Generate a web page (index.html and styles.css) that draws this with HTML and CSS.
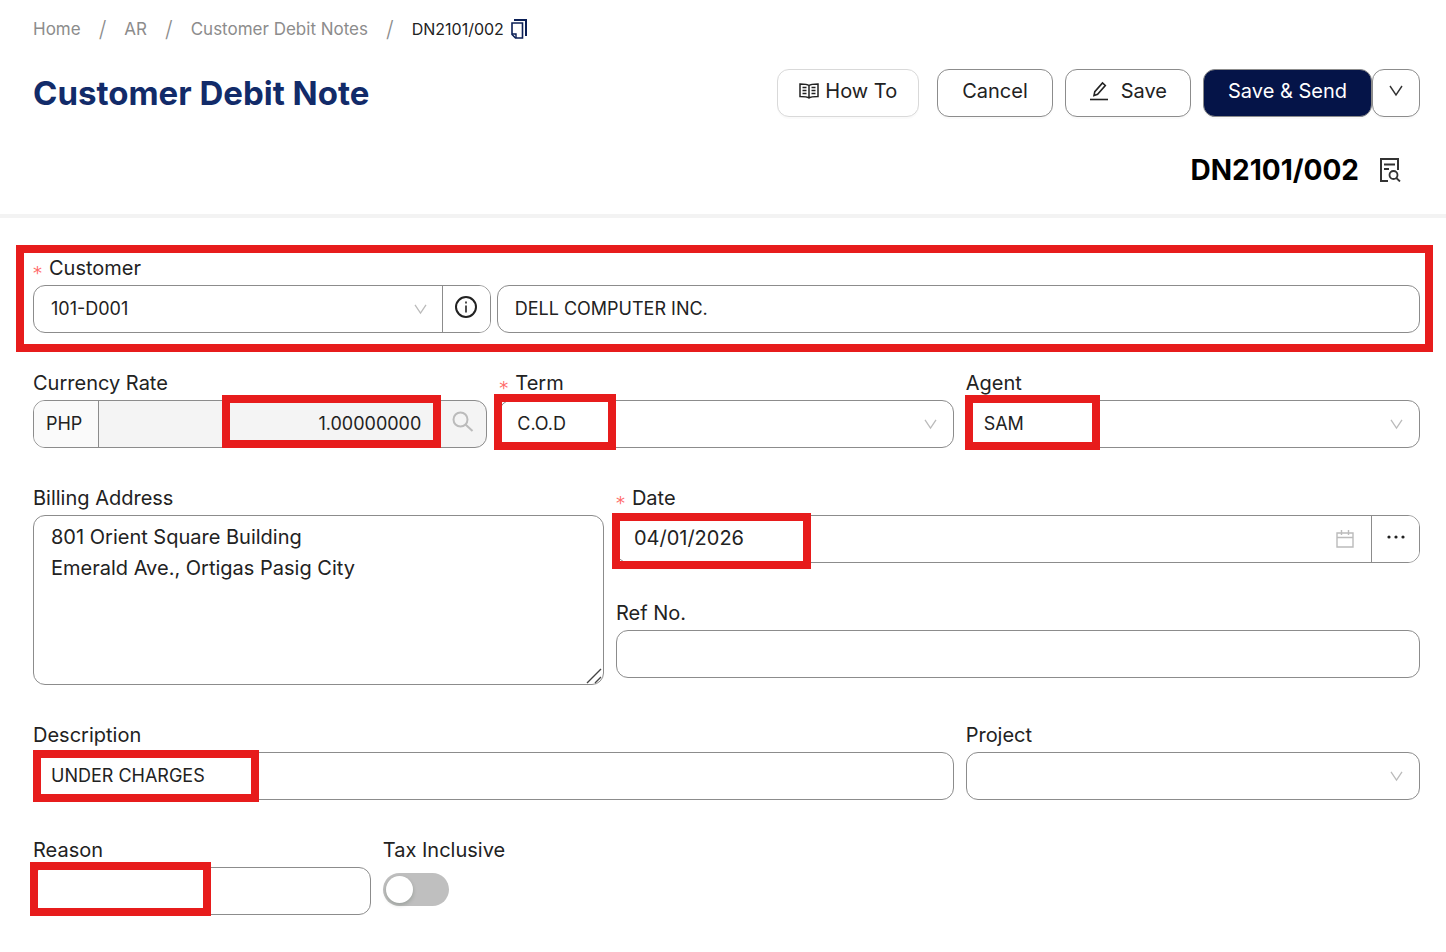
FILE: index.html
```html
<!DOCTYPE html>
<html lang="en">
  <head>
    <meta charset="utf-8">
    <title>Customer Debit Note</title>
    <link rel="stylesheet" href="styles.css">
  </head>
  <body>
    <header class="page-header">
      <nav class="breadcrumb" aria-label="Breadcrumb">
        <a href="#">Home</a>
        <span class="slash">/</span>
        <a href="#">AR</a>
        <span class="slash">/</span>
        <a href="#">Customer Debit Notes</a>
        <span class="slash">/</span>
        <span class="current">DN2101/002
          <button type="button" class="icon-btn copy" aria-label="Copy">
            <svg width="16" height="20" viewBox="0 0 16 20" fill="none" stroke="#0b1f56" stroke-width="2">
              <path d="M3 1h12v16" />
              <path d="M1 4h10.500v15H4.500L1 15.500z" stroke-width="1.600" />
              <path d="M1 15h4v4" stroke-width="1.400" />
            </svg>
          </button>
        </span>
      </nav>

      <div class="title-row">
        <h1>Customer Debit Note</h1>
        <div class="actions">
          <button type="button" class="btn btn-light">
            <svg width="20" height="18" viewBox="0 0 20 18" fill="none" stroke="#222" stroke-width="1.5">
              <path d="M10 3.500C8.500 2.300 6.500 2 1 2v12.500c5.500 0 7.500.3 9 1.500 1.500-1.200 3.500-1.500 9-1.500V2c-5.500 0-7.500.3-9 1.500zM10 3.500V16" />
              <path d="M3.500 5.500h4M3.500 8.500h4M3.500 11.500h4M12.500 5.500h4M12.500 8.500h4M12.500 11.500h4" stroke-width="1.300" />
            </svg>
            How To
          </button>
          <button type="button" class="btn">Cancel</button>
          <button type="button" class="btn btn-save">
            <svg width="20" height="20" viewBox="0 0 20 20" fill="none" stroke="#222" stroke-width="1.600">
              <path d="M1 18.500h18" />
              <path d="M5 14.500l.8-3.800L13.500 2l2.800 2.500-7.700 8.700z" />
            </svg>
            Save
          </button>
          <div class="btn-group">
            <button type="button" class="btn btn-primary">Save &amp; Send</button>
            <button type="button" class="btn btn-more" aria-label="More actions">
              <svg width="14" height="12" viewBox="0 0 14 12" fill="none" stroke="#333" stroke-width="1.400"><path d="M1 1l6 9 6-9" /></svg>
            </button>
          </div>
        </div>
      </div>

      <div class="doc-row">
        <strong class="doc-no">DN2101/002</strong>
        <button type="button" class="icon-btn" aria-label="Preview">
          <svg width="22" height="24" viewBox="0 0 22 24" fill="none" stroke="#333" stroke-width="2">
            <path d="M9 23H2V1h17v11" />
            <path d="M5 6.500h11M5 11h5" stroke-width="1.800" />
            <circle cx="14.500" cy="17" r="4" stroke-width="1.800" />
            <path d="M17.300 20l3.700 3.500" stroke-width="1.800" />
          </svg>
        </button>
      </div>
    </header>

    <form class="form">
      <div class="row-customer">
        <div class="field">
          <label for="customer" class="required">Customer</label>
          <div class="group">
            <div class="select">
              <select id="customer"><option>101-D001</option></select>
              <svg class="arrow" viewBox="0 0 14 12"><path d="M1 1l6 9 6-9" /></svg>
            </div>
            <button type="button" class="addon" aria-label="Customer info">
              <svg width="24" height="24" viewBox="0 0 24 24" fill="none" stroke="#222" stroke-width="2">
                <circle cx="12" cy="12" r="10" />
                <path d="M12 10.500V17.500M12 6.500v2" stroke-width="1.600" />
              </svg>
            </button>
          </div>
        </div>
        <div class="field field-name">
          <input type="text" class="control" aria-label="Customer name" value="DELL COMPUTER INC.">
        </div>
        <span class="mark mark-customer"></span>
      </div>

      <div class="field span-4">
        <label for="rate">Currency Rate</label>
        <div class="group rate">
          <span class="prefix">PHP</span>
          <input type="text" id="rate" value="1.00000000" readonly>
          <button type="button" class="search" aria-label="Search rate">
            <svg width="22" height="22" viewBox="0 0 22 22" fill="none" stroke="#bbb" stroke-width="2">
              <circle cx="8.500" cy="8.500" r="7" />
              <path d="M13.500 13.500l7 6.500" />
            </svg>
          </button>
        </div>
        <span class="mark mark-rate"></span>
      </div>

      <div class="field span-4">
        <label for="term" class="required">Term</label>
        <div class="select">
          <select id="term" class="control"><option>C.O.D</option></select>
          <svg class="arrow" viewBox="0 0 14 12"><path d="M1 1l6 9 6-9" /></svg>
        </div>
        <span class="mark mark-term"></span>
      </div>

      <div class="field span-4">
        <label for="agent">Agent</label>
        <div class="select">
          <select id="agent" class="control"><option>SAM</option></select>
          <svg class="arrow" viewBox="0 0 14 12"><path d="M1 1l6 9 6-9" /></svg>
        </div>
        <span class="mark mark-agent"></span>
      </div>

      <div class="field span-5">
        <label for="address">Billing Address</label>
        <div class="textarea">
          <textarea id="address" class="control">801 Orient Square Building
Emerald Ave., Ortigas Pasig City</textarea>
          <svg class="grip" viewBox="0 0 16 16"><path d="M1 15L15 1M9 15l6-6" /></svg>
        </div>
      </div>

      <div class="stack span-7">
        <div class="field">
          <label for="date" class="required">Date</label>
          <div class="group">
            <input type="text" id="date" class="date" value="04/01/2026">
            <svg class="calendar" width="18" height="18" viewBox="0 0 18 18" fill="none" stroke="#bbb" stroke-width="1.400">
              <path d="M1 3h16v14H1zM1 7.500h16M5.500 0v5M12.500 0v5" />
            </svg>
            <button type="button" class="addon" aria-label="More dates">
              <svg width="18" height="4" viewBox="0 0 18 4" fill="#222">
                <circle cx="2" cy="2" r="1.600" /><circle cx="9" cy="2" r="1.600" /><circle cx="16" cy="2" r="1.600" />
              </svg>
            </button>
          </div>
          <span class="mark mark-date"></span>
        </div>
        <div class="field">
          <label for="ref">Ref No.</label>
          <input type="text" id="ref" class="control">
        </div>
      </div>

      <div class="field span-8">
        <label for="description">Description</label>
        <input type="text" id="description" class="control" value="UNDER CHARGES">
        <span class="mark mark-description"></span>
      </div>

      <div class="field span-4">
        <label for="project">Project</label>
        <div class="select">
          <select id="project" class="control"><option></option></select>
          <svg class="arrow" viewBox="0 0 14 12"><path d="M1 1l6 9 6-9" /></svg>
        </div>
      </div>

      <div class="field span-3">
        <label for="reason">Reason</label>
        <input type="text" id="reason" class="control">
        <span class="mark mark-reason"></span>
      </div>

      <div class="field span-4">
        <label for="tax">Tax Inclusive</label>
        <input type="checkbox" id="tax" class="switch" role="switch">
      </div>
    </form>
  </body>
</html>
```
FILE: styles.css
```css
* {
  box-sizing: border-box;
}
body {
  margin: 0;
  background: #fff;
  color: #222;
  font-family: Inter, "Open Sans", sans-serif;
  font-size: 18px;
}
button,
input,
select,
textarea {
  margin: 0;
  color: inherit;
  font: inherit;
}
button {
  cursor: pointer;
}
svg {
  flex: none;
}

/* header */
.page-header {
  padding: 14px 26px 0 33px;
  border-bottom: 4px solid #f3f3f3;
}
.breadcrumb {
  display: flex;
  align-items: center;
  gap: 18px;
  height: 30px;
  font-size: 17px;
}
.breadcrumb a {
  color: #8c8c8c;
  text-decoration: none;
}
.slash {
  color: #8c8c8c;
  font-size: 22px;
  font-weight: 300;
}
.current {
  display: flex;
  align-items: center;
  gap: 7px;
  font-size: 16px;
}
.icon-btn {
  display: flex;
  padding: 0;
  border: 0;
  background: none;
}
.title-row {
  display: flex;
  justify-content: space-between;
  align-items: center;
  margin-top: 25px;
}
h1 {
  margin: 0;
  color: #122b69;
  font-size: 33px;
  font-weight: 700;
}
.actions {
  display: flex;
  gap: 12px;
}
.btn {
  display: flex;
  align-items: center;
  justify-content: center;
  gap: 6px;
  height: 48px;
  padding: 0 24px 4px;
  border: 1px solid #8c8c8c;
  border-radius: 12px;
  background: #fff;
  font-size: 20px;
  box-shadow: 0 2px 0 rgba(0, 0, 0, 0.02);
}
.btn-light {
  margin-right: 6px;
  padding: 0 21px 4px;
  border-color: #d9d9d9;
}
.btn-save {
  gap: 12px;
  padding: 0 23px 4px;
}
.btn-group {
  display: flex;
}
.btn-primary {
  background: #051448;
  color: #fff;
}
.btn-more {
  width: 48px;
  padding: 0 0 4px;
}
.doc-row {
  display: flex;
  justify-content: flex-end;
  align-items: center;
  gap: 20px;
  height: 97px;
  padding: 8px 19px 0 0;
}
.doc-no {
  color: #000;
  font-size: 28px;
}

/* form */
.form {
  display: grid;
  grid-template-columns: repeat(12, 1fr);
  gap: 35px 12px;
  padding: 35px 26px 37px 33px;
}
.row-customer {
  position: relative;
  display: grid;
  grid-column: 1 / -1;
  grid-template-columns: 33% 1fr;
  gap: 6px;
}
.span-3 { grid-column: span 3; }
.span-4 { grid-column: span 4; }
.span-5 { grid-column: span 5; }
.span-7 { grid-column: span 7; }
.span-8 { grid-column: span 8; }
.field {
  position: relative;
  display: flex;
  flex-direction: column;
}
.field-name {
  justify-content: flex-end;
}
.stack {
  display: flex;
  flex-direction: column;
  gap: 35px;
}
label {
  height: 32px;
  font-size: 20px;
  line-height: 31px;
}
.required::before {
  content: "*";
  display: inline-block;
  width: 16px;
  color: #ff6b6b;
  font-family: "DejaVu Sans", sans-serif;
  font-size: 18px;
  line-height: 1;
  vertical-align: -4px;
}
.control,
.group {
  width: 100%;
  height: 48px;
  border: 1px solid #8c8c8c;
  border-radius: 12px;
  background: #fff;
}
.control,
.group input,
.group select {
  padding: 0 17px 2px;
  outline: none;
}
.group {
  display: flex;
  align-items: stretch;
  overflow: hidden;
}
.group .select,
.group input {
  flex: 1;
  min-width: 0;
}
.group input,
.group select {
  width: 100%;
  height: 100%;
  border: 0;
  background: none;
}
.group .date {
  font-size: 20px;
}
select {
  appearance: none;
}
.select,
.textarea {
  position: relative;
}
.arrow {
  position: absolute;
  top: 50%;
  right: 17px;
  width: 13px;
  height: 11px;
  margin-top: -5px;
  fill: none;
  stroke: #bbb;
  stroke-width: 1.4;
  pointer-events: none;
}
.group .arrow {
  right: 15px;
}
.addon {
  display: flex;
  align-items: center;
  justify-content: center;
  width: 48px;
  padding: 0 0 4px;
  border: 0;
  border-left: 1px solid #8c8c8c;
  background: #fff;
}
.calendar {
  align-self: center;
  margin-right: 17px;
}
.rate {
  background: #f4f4f4;
}
.prefix {
  display: flex;
  align-items: center;
  padding: 0 16px 2px 12px;
  border-right: 1px solid #8c8c8c;
  background: #fafafa;
}
.rate input {
  padding: 0 18px 2px;
  text-align: right;
}
.search {
  width: 47px;
  padding: 0 0 4px;
  border: 0;
  background: none;
}
.search svg {
  display: block;
  margin: 0 auto;
}
textarea.control {
  display: block;
  height: 170px;
  padding-top: 6px;
  font-size: 20px;
  line-height: 31px;
  resize: none;
}
.grip {
  position: absolute;
  right: 2px;
  bottom: 1px;
  width: 16px;
  height: 16px;
  fill: none;
  stroke: #444;
  stroke-width: 1.4;
}
.switch {
  appearance: none;
  width: 66px;
  height: 33px;
  margin-top: 6px;
  padding: 3px;
  border-radius: 17px;
  background: #bfbfbf;
}
.switch::before {
  content: "";
  display: block;
  width: 27px;
  height: 27px;
  border-radius: 50%;
  background: #fff;
  box-shadow: 0 2px 4px rgba(0, 35, 11, 0.2);
}
.switch:checked::before {
  margin-left: auto;
}

/* red highlight boxes over the fields */
.mark {
  position: absolute;
  border: 8px solid #e71c1c;
  pointer-events: none;
}
.mark-customer {
  top: -8px;
  right: -13px;
  bottom: -19px;
  left: -17px;
}
.mark-rate {
  top: 27px;
  right: 46px;
  width: 219px;
  height: 53px;
}
.mark-term {
  top: 26px;
  left: -5px;
  width: 122px;
  height: 56px;
}
.mark-agent {
  top: 27px;
  left: -1px;
  width: 135px;
  height: 55px;
}
.mark-date {
  top: 30px;
  left: -4px;
  width: 199px;
  height: 56px;
}
.mark-description {
  top: 30px;
  left: 0;
  width: 226px;
  height: 52px;
}
.mark-reason {
  top: 27px;
  left: -3px;
  width: 181px;
  height: 54px;
}
```
